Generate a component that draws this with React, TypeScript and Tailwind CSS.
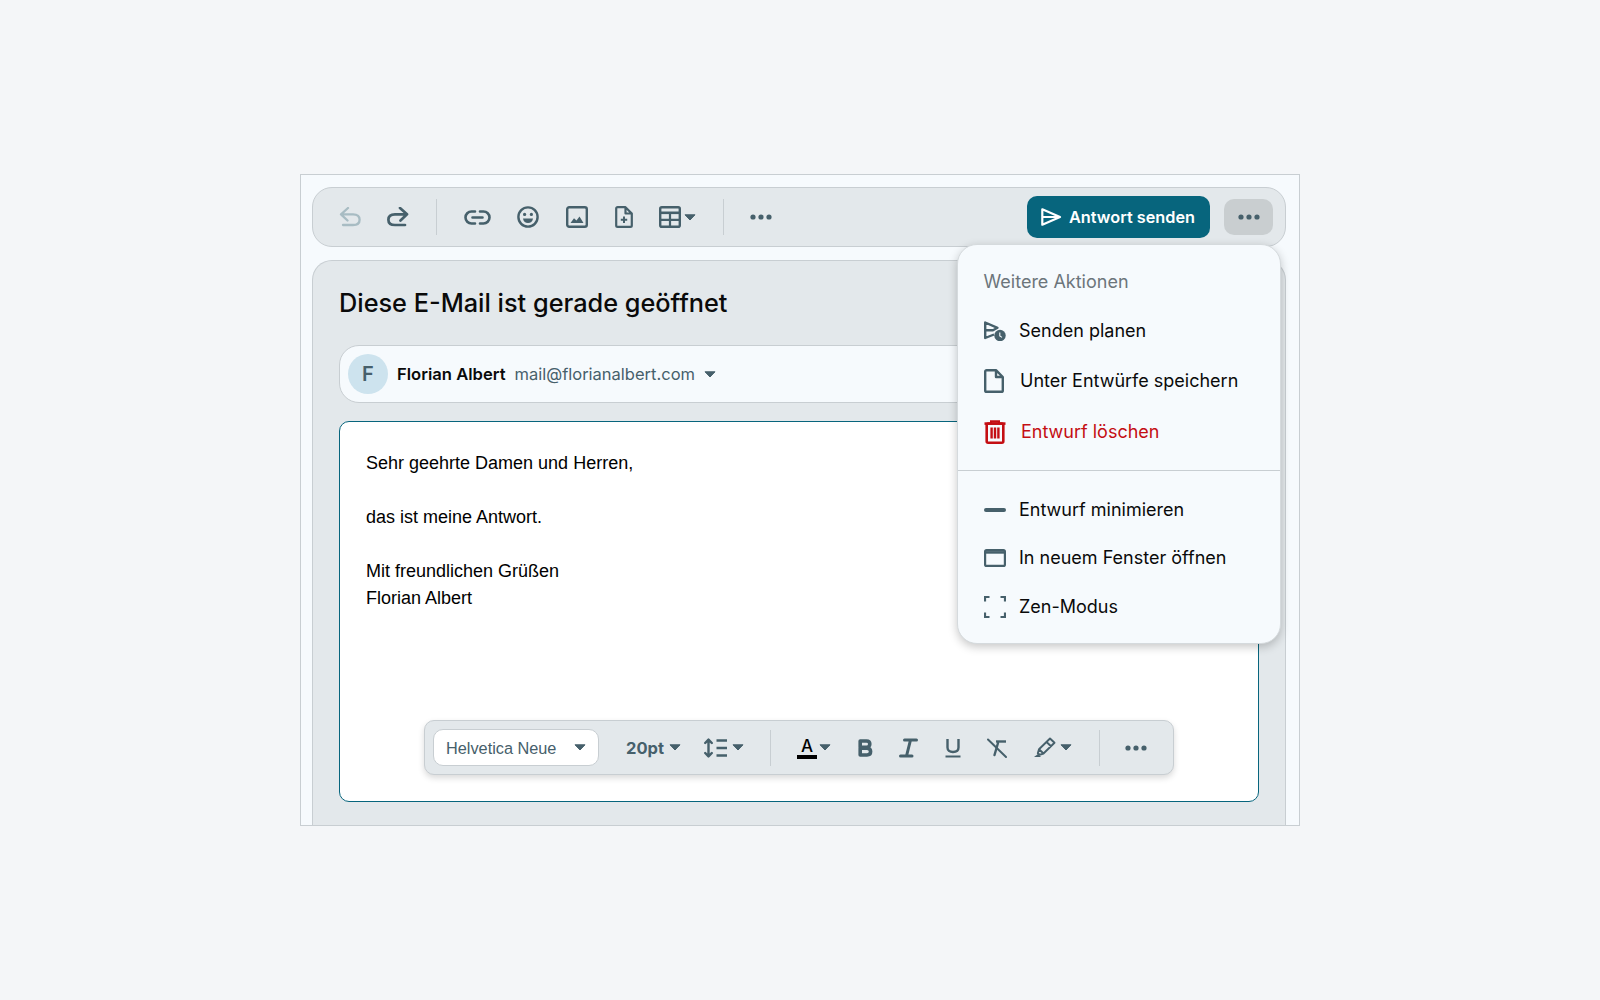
import React from "react";

const C = "#46606b";

function Caret({ className = "" }: { className?: string }) {
  return (
    <svg width="12" height="7" viewBox="0 0 12 7" className={`shrink-0 ${className}`}>
      <path d="M1 0.8 H11 L6 6 Z" fill={C} stroke={C} strokeWidth="1" strokeLinejoin="round" />
    </svg>
  );
}

function Dots({ className = "" }: { className?: string }) {
  return (
    <svg width="22" height="6" viewBox="0 0 22 6" className={`shrink-0 ${className}`}>
      <circle cx="3" cy="3" r="2.6" fill={C} />
      <circle cx="11" cy="3" r="2.6" fill={C} />
      <circle cx="19" cy="3" r="2.6" fill={C} />
    </svg>
  );
}

function Redo({ color = C, sw = 2.7, flip = false, className = "" }: { color?: string; sw?: number; flip?: boolean; className?: string }) {
  return (
    <svg width="22" height="20" viewBox="0 0 22 20" fill="none" className={`shrink-0 ${flip ? "-scale-x-100" : ""} ${className}`}>
      <path
        d="M13 1 L20 7.3 L13.5 13.5 M20 7.3 H8 C3.5 7.3 1.4 9.5 1.4 12.7 C1.4 16 3.5 18 8 18 H18"
        stroke={color}
        strokeWidth={sw}
        strokeLinecap="round"
        strokeLinejoin="round"
      />
    </svg>
  );
}

function LinkIcon({ className = "" }: { className?: string }) {
  return (
    <svg width="27" height="15" viewBox="0 0 27 15" fill="none" className={`shrink-0 ${className}`}>
      <path
        d="M11 1.5 H7.5 a6 6 0 0 0 0 12 H11 M16 1.5 H19.5 a6 6 0 0 1 0 12 H16 M8.5 7.5 H18.5"
        stroke={C}
        strokeWidth="2.6"
        strokeLinecap="round"
      />
    </svg>
  );
}

function Emoji({ className = "" }: { className?: string }) {
  return (
    <svg width="22" height="22" viewBox="0 0 22 22" fill="none" className={`shrink-0 ${className}`}>
      <circle cx="11" cy="11" r="9.6" stroke={C} strokeWidth="2.4" />
      <circle cx="7.6" cy="8.4" r="1.6" fill={C} />
      <circle cx="14.4" cy="8.4" r="1.6" fill={C} />
      <path d="M6 12.5 H16 C15.6 15.5 13.6 17 11 17 C8.4 17 6.4 15.5 6 12.5 Z" fill={C} />
    </svg>
  );
}

function ImageIcon({ className = "" }: { className?: string }) {
  return (
    <svg width="22" height="22" viewBox="0 0 22 22" fill="none" className={`shrink-0 ${className}`}>
      <rect x="1.2" y="1.2" width="19.6" height="19.6" rx="2" stroke={C} strokeWidth="2.4" />
      <path d="M4.5 17 L8 12.2 L10.5 14.5 L13.5 10.5 L17.5 17 Z" fill={C} />
    </svg>
  );
}

function FilePlus({ className = "" }: { className?: string }) {
  return (
    <svg width="18" height="22" viewBox="0 0 18 22" fill="none" className={`shrink-0 ${className}`}>
      <path
        d="M10.5 1.2 H2.6 C1.8 1.2 1.2 1.8 1.2 2.6 V19.4 C1.2 20.2 1.8 20.8 2.6 20.8 H15.4 C16.2 20.8 16.8 20.2 16.8 19.4 V7.5 Z M10.5 1.2 V7.5 H16.8"
        stroke={C}
        strokeWidth="2.2"
        strokeLinejoin="round"
      />
      <path d="M9 10.5 V17 M5.8 13.7 H12.2" stroke={C} strokeWidth="2" />
    </svg>
  );
}

function TableIcon({ className = "" }: { className?: string }) {
  return (
    <svg width="22" height="22" viewBox="0 0 22 22" fill="none" className={`shrink-0 ${className}`}>
      <rect x="1.2" y="1.2" width="19.6" height="19.6" rx="1.6" stroke={C} strokeWidth="2.4" />
      <path d="M1.2 6.8 H20.8" stroke={C} strokeWidth="2.6" />
      <path d="M1.2 13.8 H20.8 M11 6.8 V20.8" stroke={C} strokeWidth="2.2" />
    </svg>
  );
}

function SendIcon({ color = "#fff", className = "" }: { color?: string; className?: string }) {
  return (
    <svg width="21" height="18" viewBox="0 0 21 18" fill="none" className={`shrink-0 ${className}`}>
      <path
        d="M1.3 1.3 L19 9 L1.3 16.7 Z M1.3 9 H19"
        stroke={color}
        strokeWidth="2.2"
        strokeLinejoin="round"
      />
    </svg>
  );
}

function ScheduleIcon() {
  return (
    <svg width="22" height="20" viewBox="0 0 22 20" fill="none" className="shrink-0">
      <path d="M1.2 1.5 L13.5 6.8 L9 9.2 H1.2 V1.5 Z M1.2 9.2 V17 L10 13.5" stroke={C} strokeWidth="2.4" strokeLinejoin="round" />
      <circle cx="16" cy="14.5" r="5.7" fill={C} />
      <path d="M15.8 11.6 V15 L18 16.4" stroke="#f6fafd" strokeWidth="1.1" />
    </svg>
  );
}

function DocIcon() {
  return (
    <svg width="20" height="24" viewBox="0 0 20 24" fill="none" className="shrink-0">
      <path
        d="M12 1.2 H2.6 C1.8 1.2 1.2 1.8 1.2 2.6 V21.4 C1.2 22.2 1.8 22.8 2.6 22.8 H17.4 C18.2 22.8 18.8 22.2 18.8 21.4 V8 Z M12 1.2 V8 H18.8"
        stroke={C}
        strokeWidth="2.4"
        strokeLinejoin="round"
      />
    </svg>
  );
}

function TrashIcon() {
  const r = "#c40e13";
  return (
    <svg width="22" height="24" viewBox="0 0 22 24" fill="none" className="shrink-0">
      <path d="M0.5 3.6 H21.5" stroke={r} strokeWidth="2.6" />
      <path d="M7 3 V1.2 H15 V3" stroke={r} strokeWidth="2" />
      <rect x="2.7" y="3.5" width="16.6" height="19.2" rx="1.4" stroke={r} strokeWidth="2.6" />
      <path d="M7.6 7.5 V18.5 M11 7.5 V18.5 M14.4 7.5 V18.5" stroke={r} strokeWidth="2.4" />
    </svg>
  );
}

function WindowIcon() {
  return (
    <svg width="22" height="18" viewBox="0 0 22 18" fill="none" className="shrink-0">
      <rect x="1.1" y="1.1" width="19.8" height="15.8" rx="1.5" stroke={C} strokeWidth="2.2" />
      <path d="M1 3.4 H21" stroke={C} strokeWidth="2.6" />
    </svg>
  );
}

function ZenIcon() {
  return (
    <svg width="22" height="22" viewBox="0 0 22 22" fill="none" className="shrink-0">
      <path
        d="M1 5.5 V1 H5.5 M16.5 1 H21 V5.5 M21 16.5 V21 H16.5 M5.5 21 H1 V16.5"
        stroke={C}
        strokeWidth="2.2"
      />
    </svg>
  );
}

function LineHeightIcon({ className = "" }: { className?: string }) {
  return (
    <svg width="24" height="20" viewBox="0 0 24 20" fill="none" className={`shrink-0 ${className}`}>
      <path d="M4.5 2 V18 M1.2 5 L4.5 1.6 L7.8 5 M1.2 15 L4.5 18.4 L7.8 15" stroke={C} strokeWidth="2.4" strokeLinejoin="round" strokeLinecap="round" />
      <path d="M12.5 2.5 H23 M12.5 10 H23 M12.5 17.5 H23" stroke={C} strokeWidth="2.4" />
    </svg>
  );
}

function BoldIcon({ className = "" }: { className?: string }) {
  return (
    <svg width="16" height="20" viewBox="0 0 16 20" fill="none" className={`shrink-0 ${className}`}>
      <path
        d="M2.2 3 H8.5 C10.5 3 11.8 4.2 11.8 6 C11.8 7.8 10.5 9.4 8.5 9.4 H2.2 Z M2.2 10.2 H9 C11.2 10.2 12.6 11.6 12.6 13.6 C12.6 15.6 11.2 17 9 17 H2.2 Z"
        stroke={C}
        strokeWidth="3.6"
        strokeLinejoin="round"
      />
    </svg>
  );
}

function ItalicIcon({ className = "" }: { className?: string }) {
  return (
    <svg width="19" height="20" viewBox="0 0 19 20" fill="none" className={`shrink-0 ${className}`}>
      <path d="M5.5 2 H17.5 M1.5 18 H13 M11.5 2 L7.5 18" stroke={C} strokeWidth="3" strokeLinecap="round" />
    </svg>
  );
}

function UnderlineIcon({ className = "" }: { className?: string }) {
  return (
    <svg width="16" height="20" viewBox="0 0 16 20" fill="none" className={`shrink-0 ${className}`}>
      <path d="M2.5 1 V9.5 C2.5 12.5 4.5 14 8 14 C11.5 14 13.5 12.5 13.5 9.5 V1" stroke={C} strokeWidth="2.4" />
      <path d="M0.5 18.5 H15.5" stroke={C} strokeWidth="2" />
    </svg>
  );
}

function ClearIcon({ className = "" }: { className?: string }) {
  return (
    <svg width="20" height="20" viewBox="0 0 20 20" fill="none" className={`shrink-0 ${className}`}>
      <path d="M1 1.5 L19 19" stroke={C} strokeWidth="2" strokeLinecap="round" />
      <path d="M9 3.5 H19" stroke={C} strokeWidth="2.4" />
      <path d="M11 5 L7.5 17" stroke={C} strokeWidth="2.4" strokeLinecap="round" />
    </svg>
  );
}

function HighlightIcon({ className = "" }: { className?: string }) {
  return (
    <svg width="23" height="21" viewBox="0 0 23 21" fill="none" className={`shrink-0 ${className}`}>
      <path
        d="M17 1.5 L21.5 5.8 L10.5 16.5 L6 12.2 Z M13.5 5 L18 9.3 M6 12.2 L4.8 16.2 L6.5 17.8 L10.5 16.5"
        stroke={C}
        strokeWidth="1.9"
        strokeLinejoin="round"
      />
      <path d="M1 20 H8 L5 17 Z" fill={C} />
    </svg>
  );
}

function MenuRow({ icon, label, textClass = "", className = "" }: { icon: React.ReactNode; label: string; textClass?: string; className?: string }) {
  return (
    <div className={`flex items-center h-[48px] pl-[26.5px] ${className}`}>
      <div className="flex items-center">{icon}</div>
      <span className={`text-[18px] leading-[24px] ${textClass}`}>{label}</span>
    </div>
  );
}

export default function App() {
  return (
    <div className="h-[1000px] bg-[#f4f6f8] flex items-center justify-center font-['Inter',sans-serif]">
      <div className="relative w-[1000px] h-[652px] bg-[#f6fafd] border border-[#c8ced2] pl-[11px] pr-[13px] pt-[12px] flex flex-col">
        {/* top toolbar */}
        <div className="h-[60px] shrink-0 bg-[#e3e8eb] border border-[#c8ced2] rounded-[20px] flex items-center pl-[26px] pr-[12px]">
          <Redo flip color="#a8bcc3" sw={2.3} />
          <Redo className="ml-[26px]" />
          <div className="w-px h-[36px] bg-[#c8ced2] ml-[27px]" />
          <LinkIcon className="ml-[26.5px]" />
          <Emoji className="ml-[26px]" />
          <ImageIcon className="ml-[27px]" />
          <FilePlus className="ml-[27px]" />
          <TableIcon className="ml-[26px]" />
          <Caret className="ml-[3px]" />
          <div className="w-px h-[36px] bg-[#c8ced2] ml-[27px]" />
          <Dots className="ml-[26px]" />
          <div className="ml-auto mt-[-1px] w-[183px] h-[42px] rounded-[10px] bg-[#07657d] flex items-center pl-[14px] text-white">
            <SendIcon />
            <span className="ml-[7px] text-[16.3px] leading-[24px] font-semibold">Antwort senden</span>
          </div>
          <div className="ml-[14px] w-[49px] h-[36px] rounded-[10px] bg-[#c9ced0] flex items-center justify-center">
            <Dots />
          </div>
        </div>

        {/* card */}
        <div className="mt-[13px] flex-1 bg-[#e3e8eb] border border-b-0 border-[#c8ced2] rounded-t-[20px] pl-[26px] pr-[26px] pt-[26px]">
          <h1 className="text-[25.3px] leading-[32px] font-medium text-[#0a0a0a]">Diese E-Mail ist gerade geöffnet</h1>
          <div className="mt-[26px] h-[58px] bg-[#f6fafd] border border-[#c8ced2] rounded-[20px] flex items-center pl-[8px]">
            <div className="w-[40px] h-[40px] rounded-full bg-[#cde3ee] flex items-center justify-center text-[20px] font-semibold text-[#46606b]">F</div>
            <span className="ml-[9px] text-[16.6px] leading-[24px] font-semibold text-[#0a0a0a]">Florian Albert</span>
            <span className="ml-[9px] text-[16.5px] leading-[24px] text-[#46606b]">mail@florianalbert.com</span>
            <Caret className="ml-[9px]" />
          </div>
          <div className="relative mt-[18px] h-[381px] bg-white border border-[#07657d] rounded-[10px] pl-[26px] pt-[28px] font-['Liberation_Sans',sans-serif] text-[18px] leading-[27px] text-black">
            <p>Sehr geehrte Damen und Herren,</p>
            <p className="mt-[27px]">das ist meine Antwort.</p>
            <p className="mt-[27px]">Mit freundlichen Grüßen</p>
            <p>Florian Albert</p>

            <div className="absolute left-[84px] bottom-[26px] w-[750px] h-[55px] bg-[#e3e8eb] border border-[#c8ced2] rounded-[10px] shadow-[0_3px_6px_rgba(0,0,0,0.15)] flex items-center pl-[8px]">
              <div className="w-[166px] h-[37px] bg-white border border-[#c8ced2] rounded-[10px] flex items-center pl-[12px] pr-[12px] justify-between">
                <span className="text-[16.3px] leading-[24px] text-[#46606b]">Helvetica Neue</span>
                <Caret />
              </div>
              <span className="ml-[27px] font-['Inter',sans-serif] text-[16.5px] leading-[24px] font-bold text-[#46606b]">20pt</span>
              <Caret className="ml-[5px]" />
              <LineHeightIcon className="ml-[23px]" />
              <Caret className="ml-[4px]" />
              <div className="w-px h-[36px] bg-[#c8ced2] ml-[26px]" />
              <div className="ml-[26px] w-[20px] h-[24px] relative flex justify-center shrink-0">
                <span className="font-['Inter',sans-serif] text-[17px] leading-[20px] font-medium text-black">A</span>
                <div className="absolute left-0 right-0 bottom-[1px] h-[4px] bg-black" />
              </div>
              <Caret className="ml-[2px]" />
              <BoldIcon className="ml-[27px]" />
              <ItalicIcon className="ml-[25px]" />
              <UnderlineIcon className="ml-[27px]" />
              <ClearIcon className="ml-[26px]" />
              <HighlightIcon className="ml-[26px]" />
              <Caret className="ml-[4px]" />
              <div className="w-px h-[36px] bg-[#c8ced2] ml-[27px]" />
              <Dots className="ml-[25px]" />
            </div>
          </div>
        </div>

        {/* menu */}
        <div className="absolute left-[655.5px] top-[69px] w-[324.5px] h-[400px] bg-[#f6fafd] border border-[#d5dadd] rounded-[20px] shadow-[0_3px_10px_rgba(0,0,0,0.22)] pt-[25px] text-[#0a0a0a]">
          <div className="pl-[26px] text-[18px] leading-[24px] text-[#6c757b]">Weitere Aktionen</div>
          <MenuRow className="mt-[13px]" icon={<ScheduleIcon />} label="Senden planen" textClass="ml-[13px]" />
          <MenuRow className="mt-[2px]" icon={<DocIcon />} label="Unter Entwürfe speichern" textClass="ml-[16px]" />
          <MenuRow className="mt-[3px]" icon={<TrashIcon />} label="Entwurf löschen" textClass="ml-[15px] text-[#c40e13]" />
          <div className="mt-[14px] h-px bg-[#c8ced2]" />
          <MenuRow className="mt-[15px]" icon={<div className="w-[22px] h-[4px] bg-[#46606b] rounded-full" />} label="Entwurf minimieren" textClass="ml-[13px]" />
          <MenuRow icon={<WindowIcon />} label="In neuem Fenster öffnen" textClass="ml-[13px]" />
          <MenuRow className="mt-[1px]" icon={<ZenIcon />} label="Zen-Modus" textClass="ml-[13px]" />
        </div>
      </div>
    </div>
  );
}
